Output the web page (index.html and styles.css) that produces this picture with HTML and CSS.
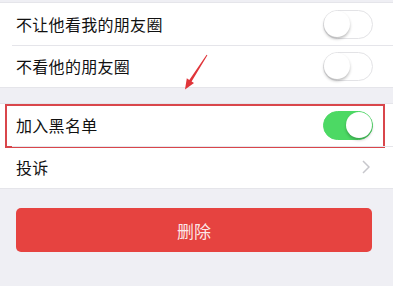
FILE: index.html
```html
<!DOCTYPE html>
<html lang="zh">
<head>
    <meta charset="UTF-8">
    <meta name="viewport" content="width=device-width, initial-scale=1.0">
    <title>资料设置</title>
    <link rel="stylesheet" href="styles.css">
</head>
<body>
    <div class="page">
        <div class="group group-top">
            <div class="cell">
                <span class="cell-title">不让他看我的朋友圈</span>
                <span class="switch"></span>
            </div>
            <div class="cell">
                <span class="cell-title">不看他的朋友圈</span>
                <span class="switch"></span>
            </div>
        </div>

        <div class="group">
            <div class="cell cell-marked">
                <span class="cell-title">加入黑名单</span>
                <span class="switch switch-on"></span>
            </div>
            <div class="cell">
                <span class="cell-title">投诉</span>
                <svg class="chevron" width="8" height="14" viewBox="0 0 8 14">
                    <path d="M1 1 L7 7 L1 13" fill="none" stroke="#c7c7cc" stroke-width="1.5"/>
                </svg>
            </div>
        </div>

        <div class="actions">
            <button class="btn-danger">删除</button>
        </div>

        <!-- annotation arrow -->
        <svg class="arrow" width="40" height="44" viewBox="0 0 40 44">
            <polygon points="25.6,3.8 26.4,4.3 10.6,30.4 13,32 4,38.5 5.8,27.3 8.3,28.9" fill="#e0353a"/>
        </svg>
    </div>
</body>
</html>
```

FILE: styles.css
```css
:root {
    --bg-grey: #efeff4;
    --line: #e5e5ea;
    --green: #4cd964;
    --danger: #e64340;
    --font-primary: "Noto Sans CJK SC", "Noto Sans", sans-serif;
}

* {
    margin: 0;
    padding: 0;
    box-sizing: border-box;
}

body {
    font-family: var(--font-primary);
    background: var(--bg-grey);
    color: #111;
}

.page {
    position: relative;
    width: 393px;
    height: 286px;
    padding-top: 2px;
    overflow: hidden;
}

.group {
    background: white;
    border-top: 1px solid var(--line);
    border-bottom: 1px solid var(--line);
}

.group + .group {
    margin-top: 15px;
}

.cell {
    position: relative;
    display: flex;
    align-items: center;
    justify-content: space-between;
    height: 42px;
    padding: 0 20px 0 16px;
}

.cell + .cell::before {
    content: "";
    position: absolute;
    top: 0;
    left: 12px;
    right: 0;
    border-top: 1px solid var(--line);
}

.cell-title {
    font-size: 16px;
    letter-spacing: 0.3px;
}

.switch {
    position: relative;
    width: 50px;
    height: 29px;
    border-radius: 15px;
    border: 1.5px solid #e3e3e6;
    background: white;
}

.switch::after {
    content: "";
    position: absolute;
    top: 0;
    left: 0;
    width: 26px;
    height: 26px;
    border-radius: 50%;
    background: white;
    box-shadow: 0 2px 3px rgba(0,0,0,0.25);
}

.switch-on {
    background: var(--green);
    border-color: var(--green);
}

.switch-on::after {
    left: auto;
    right: 0;
}

.cell-marked::after {
    content: "";
    position: absolute;
    top: 0;
    bottom: -2px;
    left: 5px;
    right: 8px;
    border: 2px solid #d9464b;
}

.chevron {
    margin-right: 3px;
}

.actions {
    padding: 19px 21px 0 16px;
}

.btn-danger {
    width: 100%;
    height: 44px;
    border: none;
    border-radius: 5px;
    background: var(--danger);
    color: rgba(255,255,255,0.88);
    font-family: var(--font-primary);
    font-size: 17px;
}

.arrow {
    position: absolute;
    left: 181px;
    top: 51px;
}
```
